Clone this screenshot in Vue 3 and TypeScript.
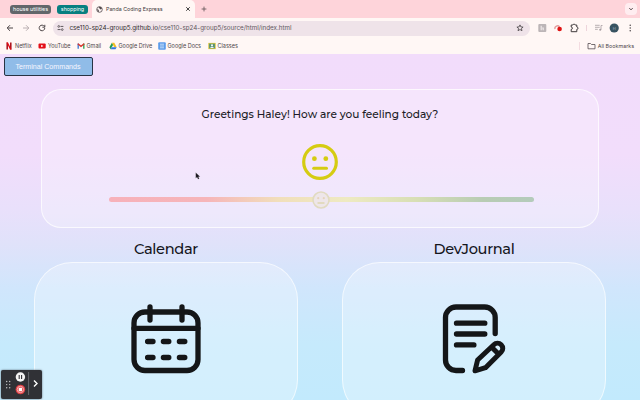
<script setup lang="ts">
const bookmarks = [
  { name: 'Netflix', kind: 'netflix' },
  { name: 'YouTube', kind: 'youtube' },
  { name: 'Gmail', kind: 'gmail' },
  { name: 'Google Drive', kind: 'drive' },
  { name: 'Google Docs', kind: 'docs' },
  { name: 'Classes', kind: 'classes' },
]
</script>

<template>
  <div class="window">
    <header class="tabs">
      <span class="group grey">house utilities</span>
      <span class="group teal">shopping</span>
      <div class="tab">
        <svg class="globe" viewBox="0 0 8 8"><circle cx="4" cy="4" r="3.2" fill="none" stroke="#50484b" stroke-width=".9" /><path d="M1 3.5 3 4.2 3.5 6.8 2.2 6.4ZM3 .9 5.6 1 6.8 3 5.2 4 4 2.8Z" fill="#50484b" /></svg>
        <span>Panda Coding Express</span>
        <svg class="close" viewBox="0 0 6 6"><path d="m1.2 1.2 3.6 3.6m0-3.6L1.2 4.8" stroke="#333" stroke-width=".9" /></svg>
      </div>
      <svg class="plus" viewBox="0 0 6 6"><path d="M3 .6v4.8M.6 3h4.8" stroke="#5d5054" stroke-width=".8" /></svg>
      <span class="chevron"><svg viewBox="0 0 6 6"><path d="m1.4 2.2 1.6 1.6 1.6-1.6" fill="none" stroke="#40373a" /></svg></span>
    </header>

    <nav class="toolbar">
      <svg class="nav" viewBox="0 0 8 8"><path d="M7 4H1.3M4 1.2 1.2 4 4 6.8" fill="none" stroke="#4b4446" /></svg>
      <svg class="nav" viewBox="0 0 8 8"><path d="M1 4h5.7M4 1.2 6.8 4 4 6.8" fill="none" stroke="#aaa0a2" stroke-width=".8" /></svg>
      <svg class="nav" viewBox="0 0 8 8"><path d="M6.4 2.5A2.8 2.8 0 1 0 6.8 4M6.8.8v2.4H4.4" fill="none" stroke="#4b4446" /></svg>
      <div class="address">
        <svg class="tune" viewBox="0 0 8 8"><path d="M4 2.2h3.3M.7 5.8H4" stroke="#4b4649" /><circle cx="2" cy="2.2" r="1" fill="none" stroke="#4b4649" stroke-width=".9" /><circle cx="6" cy="5.8" r="1" fill="none" stroke="#4b4649" stroke-width=".9" /></svg>
        <span class="url">cse110-sp24-group5.github.io<i>/cse110-sp24-group5/source/html/index.html</i></span>
        <svg class="star" viewBox="0 0 8 8"><path d="m4 .9.9 2 2.2.2-1.7 1.4.6 2.2-2-1.2-2 1.2.6-2.2L.9 3.1l2.2-.2Z" fill="none" stroke="#423d40" stroke-width=".8" /></svg>
      </div>
      <svg class="tools" viewBox="0 0 108 16">
        <rect x="6.3" y="4" width="8" height="8" rx="1" fill="#bcb5b7" /><path d="M8.6 5.8h1.2v4.4H8.6ZM10.2 7.4h1.6v2.8h-1.2V8.4h-.4Z" fill="#efe9e9" />
        <path d="M23 9a2.5 2.5 0 0 1 4.5-2" fill="none" stroke="#e29a9a" stroke-width="1.4" /><circle cx="27.6" cy="9" r="2.3" fill="#df1212" />
        <path d="M39.2 5h1.7a1.2 1.2 0 0 1 2.3 0h1.6v2a1.2 1.2 0 0 1 0 2.4v2.3h-5.6V9.4a1.2 1.2 0 0 0 0-2.4Z" fill="none" stroke="#3e393b" />
        <path d="M54.5 5v6" stroke="#edd4db" />
        <path d="M63 5.3h4.7M63 7.3h4.7M63 9.3h2.8M69 9.8V5.5h1.5" fill="none" stroke="#a69da1" stroke-width=".8" /><circle cx="68.2" cy="9.8" r="1" fill="#a69da1" />
        <circle cx="82.2" cy="8" r="4.6" fill="#385361" /><text x="80.8" y="9.5" class="initial">H</text>
        <circle cx="98.2" cy="5.2" r=".7" fill="#393437" /><circle cx="98.2" cy="8" r=".7" fill="#393437" /><circle cx="98.2" cy="10.8" r=".7" fill="#393437" />
      </svg>
    </nav>

    <div class="bookmarks">
      <span v-for="b in bookmarks" :key="b.name" class="bookmark" :class="b.kind">
        <svg viewBox="0 0 8 8">
          <g v-if="b.kind === 'netflix'"><path d="M2.2.5v7M5.8.5v7" stroke="#a90b14" stroke-width="1.5" /><path d="m1.5.5 3.5 7h1.5L3 .5Z" fill="#e50914" /></g>
          <g v-else-if="b.kind === 'youtube'"><rect x=".5" y="1.4" width="7.2" height="5.2" rx="1" fill="#e30e18" /><path d="m3.2 2.7 2.2 1.3-2.2 1.3Z" fill="#fff" /></g>
          <g v-else-if="b.kind === 'gmail'"><path d="M1.2 6.8V1.5" stroke="#477ed7" stroke-width="1.4" /><path d="M6.8 6.8V1.5" stroke="#35a45b" stroke-width="1.4" /><path d="M.8 1.7 4 4.4l3.2-2.7" fill="none" stroke="#d9342b" stroke-width="1.4" /></g>
          <g v-else-if="b.kind === 'drive'"><path d="M2.9.8.4 5.2l1.2 2 2.6-4.4Z" fill="#239b55" /><path d="M2.9.8h2.4l2.4 4.4H5.2Z" fill="#f2bd23" /><path d="M2.8 5.2h4.9l-1.2 2H1.6Z" fill="#3178e2" /></g>
          <g v-else-if="b.kind === 'docs'"><rect x=".2" y=".2" width="7.6" height="7.6" rx="1" fill="#5c9cea" /><path d="M2 2.2h4M2 4h4M2 5.8h4" stroke="#dcecfa" stroke-width=".8" /></g>
          <g v-else><rect x=".3" y=".9" width="7.4" height="6.2" fill="#d9c43d" /><rect x="1.1" y="1.7" width="5.8" height="4.6" fill="#5a9476" /><circle cx="4" cy="3.2" r="1" fill="#fff" /><path d="M2 6q2-3 4 0" fill="#eef" /></g>
        </svg>
        <span>{{ b.name }}</span>
      </span>
      <span class="all">
        <svg viewBox="0 0 9 8"><path d="M1 1.5h2.5l1 1H8v4.3H1Z" fill="none" stroke="#544d50" stroke-width=".8" /></svg>
        <span>All Bookmarks</span>
      </span>
    </div>

    <main class="page">
      <button class="terminal">Terminal Commands</button>
      <section class="mood">
        <h1>Greetings Haley! How are you feeling today?</h1>
        <svg class="face" viewBox="0 0 36 36"><circle cx="18" cy="18" r="16.3" fill="none" stroke="#d5cc12" stroke-width="3.2" /><circle cx="12.4" cy="14.7" r="2.4" fill="#d5cc12" /><circle cx="23.8" cy="14.7" r="2.4" fill="#d5cc12" /><path d="M11.7 24.3h12.8" stroke="#d5cc12" stroke-width="3" stroke-linecap="round" /></svg>
        <div class="slider">
          <svg class="thumb" viewBox="0 0 18 18"><circle cx="9" cy="9" r="8" fill="#eee6e9" stroke="#e1dac0" stroke-width="1.6" /><circle cx="6.2" cy="7.2" r="1.1" fill="#e5d3bd" /><circle cx="11.8" cy="7.2" r="1.1" fill="#e5d3bd" /><path d="M5.5 12h7" stroke="#ddd4ae" stroke-width="1.4" /></svg>
        </div>
      </section>

      <div class="features">
        <article class="feature">
          <h2>Calendar</h2>
          <div class="panel">
            <svg class="icon" viewBox="0 0 70 70" fill="none" stroke="#141618" stroke-width="5.3" stroke-linecap="round" stroke-linejoin="round">
              <rect x="3" y="8" width="64" height="58.5" rx="11" /><path d="M3 24.3h64M19 3v13M51 3v13M16.6 37.5h5.4M32.4 37.5h5.4M48.4 37.5h5.4M16.6 53.5h5.4M32.4 53.5h5.4M48.4 53.5h5.4" />
            </svg>
          </div>
        </article>
        <article class="feature">
          <h2>DevJournal</h2>
          <div class="panel">
            <svg class="icon" viewBox="0 0 70 70" fill="none" stroke="#141618" stroke-width="5.3" stroke-linecap="round" stroke-linejoin="round">
              <path d="M56.2 29.5V13.5A10.5 10.5 0 0 0 45.7 3H17A10.5 10.5 0 0 0 6.5 13.5V56A10.5 10.5 0 0 0 17 66.5h6.5M17.5 19.2h28.3M17.5 30h28.3M17.5 40.9h17.4" />
              <path d="M36 66.8 38.6 56 54.8 40.7a5.2 5.2 0 0 1 7.4 7.4L46.5 63.7ZM53 43.5l6.5 6.5" stroke-width="5" />
            </svg>
          </div>
        </article>
      </div>
    </main>

    <aside class="recorder">
      <svg viewBox="0 0 41 29">
        <g fill="#c8c9cc"><circle cx="5.7" cy="11.5" r=".7" /><circle cx="8.7" cy="11.5" r=".7" /><circle cx="5.7" cy="14.6" r=".7" /><circle cx="8.7" cy="14.6" r=".7" /><circle cx="5.7" cy="17.7" r=".7" /><circle cx="8.7" cy="17.7" r=".7" /></g>
        <circle cx="19.4" cy="7" r="4.7" fill="#f5f5f5" /><path d="M18.2 5v4M20.6 5v4" stroke="#303136" stroke-width="1.1" />
        <circle cx="19.4" cy="19.5" r="4.8" fill="#df3f45" /><circle cx="19.4" cy="19.5" r="3.2" fill="none" stroke="#ffd7d5" stroke-width=".7" /><rect x="17.7" y="17.8" width="3.4" height="3.4" fill="#fff" />
        <path d="M27.6 2v23" stroke="#74757b" stroke-width=".8" /><path d="m33 10.4 3 3-3 3" fill="none" stroke="#fff" stroke-width="1.4" />
      </svg>
    </aside>
    <svg class="cursor" viewBox="0 0 6 8"><path d="M.7.5v5.8l1.4-1.1.9 2.1 1.3-.6-.9-1.9h1.8Z" fill="#17131b" stroke="#fff" stroke-width=".2" /></svg>
  </div>
</template>

<style>
body { margin: 0; overflow: hidden; }
</style>

<style scoped>
* { box-sizing: border-box; }
svg { display: block; flex: none; overflow: visible; }
.window { position: relative; display: flex; flex-direction: column; width: 640px; height: 400px; overflow: hidden; font-family: Inter, "Liberation Sans", sans-serif; color: #4d4649; }
.tabs { display: flex; align-items: center; height: 18px; padding-left: 10px; background: #fed4da; font-size: 5.8px; flex: none; }
.group { height: 9px; line-height: 9px; text-align: center; border-radius: 3px; color: #fff; white-space: nowrap; }
.grey { width: 41px; margin-right: 6px; background: #62666a; font-size: 5.4px; }
.teal { width: 31px; background: #087f80; font-size: 5.3px; }
.tab { display: flex; align-items: center; width: 103px; height: 18px; margin-left: 4px; padding: 0 4px; background: #fff7f5; border-radius: 5px 5px 0 0; color: #403a3c; white-space: nowrap; font-size: 5.3px; }
.globe { width: 7px; height: 7px; margin-right: 3px; }
.close { width: 6px; height: 6px; margin-left: auto; }
.plus { width: 6px; height: 6px; margin-left: 6px; }
.chevron { display: grid; place-items: center; width: 12px; height: 12px; margin: 0 3px 0 auto; background: #ffedf0; border-radius: 4px; }
.chevron svg { width: 6px; height: 6px; }
.toolbar { display: flex; align-items: center; height: 20px; padding-left: 6px; background: #fff7f5; flex: none; }
.nav { width: 8px; height: 8px; margin-right: 8px; }
.address { display: flex; flex: none; align-items: center; width: 477px; height: 15px; margin-left: -1px; padding: 0 6px 0 4px; border-radius: 8px; background: #efe3e9; }
.tune { width: 7px; height: 8px; margin-right: 5.5px; }
.url { width: 223px; font-size: 6.25px; color: #302b2e; white-space: nowrap; }
.url i { font-style: normal; color: #625860; }
.star { width: 8px; height: 8px; margin-left: auto; }
.tools { width: 108px; height: 16px; margin-left: 2px; }
.initial { fill: #a9bdc5; font-size: 4px; }
.bookmarks { display: flex; align-items: center; height: 16px; padding-left: 5px; background: #fff7f5; font-size: 5.5px; flex: none; }
.bookmark { display: flex; align-items: center; gap: 2px; white-space: nowrap; padding-bottom: 1px; }
.bookmark svg { width: 8px; height: 8px; }
.netflix { width: 33px; }
.youtube { width: 38.5px; }
.gmail { width: 32px; }
.drive { width: 49px; }
.docs { width: 50px; }
.classes { width: 40px; }
.all { display: flex; align-items: center; gap: 2px; height: 8px; margin: 0 6px 1px auto; padding-left: 7px; border-left: 1px solid #f4dce1; font-size: 5.35px; }
.all svg { width: 9px; height: 8px; }
.page { flex: 1; min-height: 0; overflow: hidden; padding-top: 3px; background: linear-gradient(#f2dcfb 0, #f2ddfb 100px, #e9e0fb 155px, #e0e2fa 190px, #d0e6fc 235px, #c6eafc 290px, #c2eafd 346px); }
.terminal { display: block; width: 89px; height: 19px; margin-left: 3.5px; padding: 1px 0 0; border: 1px solid #283344; border-radius: 2px; background: #90bce8; color: #f7f6ff; font: 7.1px/16px "Liberation Sans", sans-serif; text-align: center; }
.mood { display: flex; flex-direction: column; align-items: center; width: 558px; height: 139px; margin: 13px 0 0 41px; border: 1.5px solid rgba(255,255,255,.72); border-radius: 20px; background: rgba(255,255,255,.25); }
.mood h1 { margin: 16px 0 0; color: #201c26; font: 500 10.55px/17px "Montserrat", "Noto Sans", sans-serif; white-space: nowrap; }
.face { width: 36px; height: 36px; margin-top: 21px; }
.slider { display: flex; justify-content: center; align-items: center; width: 425px; height: 5px; margin-top: 17px; margin-left: 2px; border-radius: 3px; background: linear-gradient(90deg,#f7b1ba 0,#f6b5b9 23%,#f1dfbb 40%,#eeeac2 56%,#d8dfb5 72%,#b8ccb4 88%,#b4cbbb 100%); }
.thumb { width: 18px; height: 18px; }
.features { display: flex; gap: 44px; padding: 10px 34px 0; }
.feature { width: 264px; }
.feature h2 { margin: 0; height: 24px; color: #15161d; font: 500 14.6px/23px "Montserrat", "Noto Sans", sans-serif; letter-spacing: -.32px; text-align: center; }
.panel { display: flex; justify-content: center; height: 156px; padding-top: 41px; border: 1px solid rgba(255,255,255,.65); border-radius: 38px; background: rgba(255,255,255,.27); }
.icon { width: 70px; height: 70px; }
.recorder { position: absolute; left: 1px; top: 370px; width: 41px; height: 29px; border-radius: 2px; background: #303136; box-shadow: 0 0 2px #55606a; }
.recorder svg { width: 41px; height: 29px; }
.cursor { position: absolute; left: 195px; top: 172px; width: 6px; height: 8px; }
</style>
